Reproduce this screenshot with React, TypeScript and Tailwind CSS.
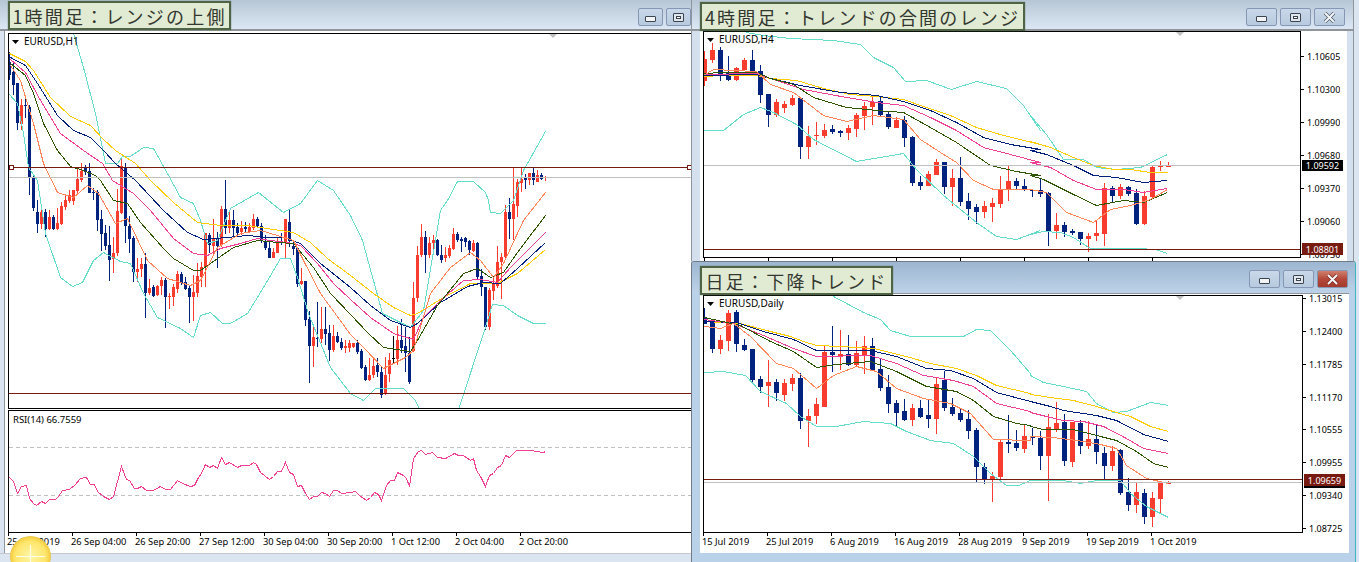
import React from "react";

type C = number[];
const BULL = "#f83d2f";
const BEAR = "#00227f";
const TEAL = "#66dccd";
const YEL = "#ffcc00";
const NAVY = "#001f7a";
const PINK = "#f03f96";
const GRN = "#2f5600";
const ORG = "#ff875a";
const RED = "#771a10";
const GREY = "#c0c0c0";

const scale = (a: number[], ox: number, oy: number) => {
  const out: number[] = [];
  for (let i = 0; i < a.length; i += 2) out.push(ox + a[i] / 3, oy + a[i + 1] / 3);
  return out;
};
const P = ({ p, c }: { p: number[]; c: string }) => (
  <polyline points={p.map((v) => Math.floor(v) + 0.5).join(" ")} fill="none" stroke={c} strokeWidth={1} shapeRendering="crispEdges" />
);

const Candles = ({ data, half }: { data: C[]; half: number }) => (
  <g shapeRendering="crispEdges">
    {data.map((d, i) => {
      const [x, t, h, o, c, l] = d;
      const col = t === 1 ? BULL : t === 2 ? "#000" : BEAR;
      return (
        <g key={i} fill={col}>
          <rect x={x} y={Math.round(h)} width={1} height={Math.max(1, Math.round(l - h))} />
          <rect x={x - half} y={Math.round(o)} width={half * 2 + 1} height={Math.max(1, Math.round(c - o))} />
        </g>
      );
    })}
  </g>
);

const H1: C[] = [
[9,0,52,62,75,80],[13,0,62,72,85,95],[17,0,83,83,123,130],[21,1,99,105,124,130],[25,0,99,105,106,118],[29,0,105,107,178,195],[33,0,176,177,208,211],[37,0,200,212,224,233],[41,1,205,212,224,229],[45,0,209,212,229,237],[49,1,210,217,229,230],[53,0,215,217,229,230],[57,1,208,223,229,230],[61,1,202,206,224,225],[65,1,195,200,207,210],[69,1,190,195,201,203],[73,1,190,190,201,205],[77,1,167,179,191,193],[81,1,163,171,180,182],[85,0,165,168,172,175],[89,0,163,171,193,193],[93,0,188,192,193,200],[97,0,190,192,220,231],[101,0,210,219,234,251],[105,0,225,233,246,250],[109,0,226,245,260,281],[113,1,237,253,259,273],[117,1,189,211,253,256],[121,1,157,166,213,214],[125,0,163,168,226,243],[129,0,216,226,239,253],[133,0,236,238,272,282],[137,1,258,269,272,282],[141,1,258,264,269,277],[145,0,253,264,293,318],[149,1,279,288,293,295],[153,0,285,287,296,297],[157,1,285,286,295,296],[161,1,277,280,286,295],[165,0,278,280,297,328],[169,1,293,296,297,309],[173,1,284,287,297,306],[177,1,271,274,289,293],[181,0,272,274,283,285],[185,0,277,282,289,290],[189,0,286,288,297,323],[193,1,275,292,297,321],[197,1,263,276,293,297],[201,1,262,267,277,287],[205,1,233,233,267,287],[209,0,233,235,245,253],[213,1,219,238,246,255],[217,0,232,238,246,268],[221,1,206,209,245,247],[225,0,180,209,228,234],[229,1,211,220,228,233],[233,0,210,220,228,236],[237,0,223,227,233,237],[241,1,221,228,232,235],[245,0,222,227,229,233],[249,1,223,227,232,233],[253,1,214,219,228,230],[257,0,217,219,226,227],[261,0,223,226,241,243],[265,0,235,241,248,250],[269,0,240,248,258,258],[273,1,248,252,258,258],[277,1,238,241,253,253],[281,0,233,241,243,245],[285,1,219,219,243,258],[289,0,210,222,241,247],[293,0,242,246,249,255],[297,0,248,248,284,287],[301,1,268,281,284,285],[305,0,281,281,320,326],[309,0,311,319,346,383],[313,1,327,337,346,367],[317,0,302,338,339,347],[321,1,307,329,339,343],[325,0,307,329,334,345],[329,0,325,333,350,361],[333,1,325,336,350,352],[337,0,332,336,342,343],[341,0,338,342,348,350],[345,1,340,346,348,353],[349,1,340,343,348,352],[353,1,343,343,347,348],[357,0,340,343,352,354],
[361,0,349,351,368,369],[365,0,365,367,380,381],[369,1,358,375,380,381],[373,1,358,366,375,378],[377,0,358,365,372,377],[381,0,367,372,395,398],[385,1,357,375,394,395],[389,1,353,360,374,382],[393,2,336,358,359,363],[397,1,326,340,359,365],[401,0,319,340,348,353],[405,0,327,346,353,372],[409,0,337,353,382,384],[413,1,282,298,351,352],[417,1,246,255,298,302],[421,1,224,237,255,257],[425,0,231,237,255,273],[429,1,237,243,255,258],[433,1,235,240,243,250],[437,0,239,240,255,256],[441,0,245,255,260,263],[445,1,247,255,258,262],[449,1,245,248,256,258],[453,1,228,234,249,250],[457,0,232,234,240,242],[461,0,237,239,241,252],[465,0,237,238,242,247],[469,0,240,241,250,255],[473,1,240,243,251,252],[477,0,242,243,277,279],[481,0,269,276,287,296],[485,0,287,287,327,330],[489,1,288,290,327,330],[493,1,277,283,291,300],[497,1,246,262,286,288],[501,1,253,257,262,299],[505,1,205,212,257,260],[509,0,198,212,219,239],[513,1,167,204,219,240],[517,1,179,182,206,217],[521,1,167,179,183,192],[525,0,174,178,180,189],[529,1,173,173,180,185],[533,0,168,173,180,185],[537,1,170,175,182,182],[541,0,173,175,179,180],[545,1,176,177,178,181],
];

const y1 = [9,53,25,61,33,70,50,97,70,116,90,125,103,139,115,150,135,163,150,180,173,202,197,222,220,225,247,225,273,229,293,232,310,242,327,258,350,275,373,293,393,307,410,315,417,313,443,297,470,283,497,283,517,273,545,249];
const n1 = [10,57,25,65,37,83,57,115,73,130,90,137,103,150,115,163,135,180,163,210,187,232,203,239,227,237,247,235,267,237,283,237,300,243,320,263,350,287,370,305,390,320,410,327,417,323,440,302,467,286,483,282,500,283,517,268,545,242];
const p1 = [10,59,25,72,40,100,60,133,83,150,102,163,112,180,133,193,150,210,173,238,193,253,207,255,220,248,240,243,257,238,270,240,287,242,300,245,317,263,333,283,350,299,370,317,393,333,413,339,423,317,440,300,463,280,480,279,497,282,510,267,545,232];
const g1 = [10,63,25,75,33,93,43,123,57,150,70,166,83,170,95,175,100,180,113,200,127,203,140,222,163,248,173,258,193,270,200,270,217,258,233,247,257,240,277,242,293,243,313,267,330,293,350,314,367,332,383,347,410,351,417,340,437,305,463,273,477,268,490,277,503,272,517,252,545,215];
const o1 = [10,65,20,80,33,123,43,163,57,192,73,197,87,185,98,193,115,223,127,218,147,260,167,278,190,285,200,280,217,247,240,233,260,230,277,235,293,240,303,260,320,293,350,334,363,347,383,368,405,357,413,350,430,293,450,267,470,252,480,260,493,277,503,263,523,220,545,192];
const t1a = [73,33,83,67,95,113,105,163,117,163,122,156,130,156,143,147,153,148,167,173,180,197,193,203,200,220,207,243,217,240,230,208,258,192,283,212,300,203,317,180,333,190,350,215,362,240,382,313,410,327,423,310,440,210,447,200,457,181,473,181,485,192,488,200,490,212,500,213,513,200,523,170,545,131];
const t1b = [9,94,17,103,23,133,28,167,37,180,45,233,60,277,72,286,82,282,93,260,103,252,120,261,130,263,143,293,157,317,180,328,193,337,200,315,210,312,222,323,230,323,247,313,263,287,280,258,290,258,297,277,308,313,330,367,350,393,363,400,375,388,403,388,415,400,419,409];
const t1c = [458,409,461,400,483,333,492,304,503,305,517,315,533,323,545,323];

const rsiA = [27,262,40,275,53,310,65,288,78,286,88,325,100,340,110,346,125,335,135,340,148,328,165,328,175,318,188,300,208,297,225,282,240,265,258,262,270,282,282,283,292,305,310,318,328,328,340,318,363,230,378,268,388,272,402,295,412,295,425,290,438,302,460,302,482,290,497,297,510,297,533,272,548,280,570,288,582,285,595,262,605,250,616,222,628,232,640,226,652,234,664,203,676,224,688,218,712,232,724,226,748,226,760,218,770,224,782,248,808,268,820,260,832,245,844,244,856,218,868,248,880,254,892,288,904,287,916,310,928,328,940,320,952,319,965,308,977,310,988,318,1000,302,1012,302,1024,310,1050,308];
const rsiB = [0,306,15,305,27,315,48,331,60,322,72,307,85,312,95,331,110,285,120,272,132,270,143,247,160,255,170,265,179,288,190,205,205,185,214,180,226,193,246,188,262,203,285,205,312,191,325,196,340,196,360,210,370,205,380,240,392,258,407,288,418,255,430,250,442,232,455,226,467,197,478,202,500,182,530,182,545,180,560,184,580,187,585,184];

const H4raw: C[] = [
[0,0,155,180,245,260,1],[1,0,132,153,183,192,1],[2,0,145,153,228,248,0],[3,0,172,220,243,246,0],[4,0,204,207,243,246,1],[5,0,178,183,212,214,1],[6,0,153,183,218,228,0],[7,0,197,217,288,312,0],[8,0,285,285,348,383,0],[9,0,300,309,348,355,1],[10,0,306,316,328,342,1],[11,0,289,297,319,322,1],[12,0,297,297,443,480,0],[13,0,380,411,443,480,1],[14,0,370,408,412,438,1],[15,0,375,393,412,418,1],[16,0,378,390,398,405,0],[17,0,392,396,402,414,0],[18,0,378,387,402,422,1],[19,0,343,348,390,414,1],[20,0,308,321,351,392,1],[21,0,290,310,324,378,1],[22,0,295,306,349,351,0],[23,0,338,345,384,388,0],[24,0,355,362,385,388,1],[25,0,350,363,417,444,0],[26,0,412,414,551,563,0],[27,0,532,549,561,573,0],[28,0,515,525,561,561,1],[29,0,480,489,528,528,1],[30,0,489,489,563,585,0],[31,0,510,537,564,620,1],[32,0,473,537,609,620,0],[33,0,582,606,630,662,0],[34,0,615,624,639,675,0],[35,0,605,621,639,655,1],[36,0,597,612,624,669,1],[37,0,531,570,615,627,1],[38,0,501,546,573,606,1],[39,0,538,546,561,570,0],[40,0,540,561,573,576,0],[41,0,570,572,574,594,0],[42,0,538,573,585,594,0],[43,0,580,582,696,741,0],[44,0,642,678,696,720,1],[45,0,670,678,698,714,0],[46,0,690,696,702,708,0],[47,0,699,699,720,738,0],[48,0,702,711,720,759,1],[49,0,664,702,711,726,1],[50,0,552,567,705,741,1],[51,0,561,567,591,612,0],[52,0,555,564,591,600,1],[53,0,561,564,585,591,0],[54,0,570,582,675,678,0],[55,0,576,591,675,678,1],[56,0,498,504,594,600,1],[57,0,486,501,504,516,1],[58,0,489,498,504,504,1]];
const H4: C[] = H4raw.map((d) => [704 + 8 * d[0], d[6], d[2] / 3, d[3] / 3, d[4] / 3, d[5] / 3]);

const DArawA: C[] = [
[0,145,170,192,194,0],[1,178,183,267,279,0],[2,225,240,267,282,1],[3,150,159,243,273,1],[4,150,156,252,276,0],[5,237,255,270,273,0],[6,267,267,360,366,0],[7,348,357,381,399,0],[8,300,366,378,441,1],[9,357,366,399,423,0],[10,357,369,405,423,1],[11,342,354,372,393,1],[12,339,354,483,507,0],[13,447,468,483,561,1],[14,414,432,468,492,1],[15,258,276,441,441,1],[16,198,276,285,336,0],[17,210,282,288,330,1],[18,225,282,315,318,0],[19,243,279,315,318,1],[20,228,258,288,342,1],[21,234,258,330,330,0],[22,294,327,384,393,0],[23,345,381,432,459,0],[24,420,429,459,498,0],[25,417,453,480,483,0],[26,432,444,480,498,1],[27,420,444,471,474,0],[28,420,465,477,504,0],[29,354,372,477,522,1],[30,333,360,444,453,0],[31,414,441,462,468,0],[32,444,459,480,486,0],[33,450,477,513,537,0],[34,504,510,621,666,0],[35,609,621,657,672,0],[36,636,648,657,726,1],[37,540,546,651,657,1],[38,465,546,552,579,0],[39,510,549,564,573,0],[40,492,528,567,579,1]];
const DArawB: C[] = [
[41,415,438,444,465,0],[42,423,444,498,540,0],[43,372,411,498,633,1],[44,336,399,417,426,1],[45,372,396,513,528,0],[46,396,396,516,531,1],[47,390,399,468,492,0],[48,393,447,468,477,1],[49,402,447,486,522,0],[50,471,489,528,570,0],[51,468,483,528,543,1],[52,477,480,609,615,0],[53,564,606,645,663,0],[54,579,606,645,669,1],[55,597,609,681,702,0],[56,606,624,681,711,1],[57,573,579,627,669,1],[58,573,576,582,582,1]];
const conv = (d: C, oy: number): C => [704 + 8 * d[0], d[5], oy + d[1] / 3, oy + d[2] / 3, oy + d[3] / 3, oy + d[4] / 3];
const DA: C[] = [...DArawA.map((d) => conv(d, 260)), ...DArawB.map((d) => conv(d, 290))];

const join = (a: number[], ao: [number, number], b: number[], bo: [number, number]) => [
  ...scale(a, ao[0], ao[1]),
  ...scale(b, bo[0], bo[1]),
];
const H4L = (a: number[], b: number[]) => join(a, [690, 0], b, [1030, 0]);
const DL = (a: number[], b: number[]) => join(a, [690, 260], b, [1030, 290]);

const h4Lines: [number[], string][] = [
  [H4L([40,395,100,395,160,345,210,325,250,340,320,375,370,420,500,488,640,462,680,510,760,590,860,670,920,712,980,722,1050,695], [0,705,40,697,90,700,130,715,180,747,350,747]), TEAL],
  [scale([375,752,412,762], 1030, 0), TEAL],
  [H4L([170,100,220,110,300,118,430,125,510,135,550,175,610,205,645,248,710,243,785,270,860,248,950,268,1000,320,1050,395], [0,350,50,405,100,480,160,480,200,505,260,510,330,505,412,465]), TEAL],
  [H4L([40,232,100,230,200,230,240,238,320,245,400,268,480,286,560,292,640,300,700,322,780,350,860,385,940,408,1050,435], [0,428,60,445,130,475,190,500,250,510,300,510,360,520,412,520]), YEL],
  [H4L([40,228,200,226,240,238,330,258,450,280,560,290,640,308,720,335,800,370,880,415,960,435,1050,450], [0,455,50,465,130,500,190,528,260,535,340,550,412,544]), NAVY],
  [H4L([40,225,200,224,240,238,340,270,470,295,560,310,640,320,720,355,800,395,880,445,960,465,1050,490], [0,490,60,505,130,545,200,572,280,572,340,580,412,567]), PINK],
  [H4L([40,222,100,219,200,220,240,238,310,255,370,295,470,325,560,335,640,340,720,385,800,430,900,500,980,518,1050,530], [0,530,40,540,130,585,200,620,280,604,340,610,412,580]), GRN],
  [H4L([40,228,70,210,130,215,200,218,240,255,310,280,400,350,470,368,550,348,640,360,690,420,750,460,800,490,850,545,910,570,1000,570], [0,570,50,580,110,640,190,670,240,630,300,618,360,600,412,570]), ORG],
];
const dLines: [number[], string][] = [
  [DL([44,338,100,333,165,345,210,395,290,430,330,470,380,498,440,498,520,485,600,490,650,515,720,540,790,550,850,590,900,640,950,675,985,675,1020,660], [0,570,30,570,100,570,150,580,200,570,270,570,300,610,350,650,414,682]), TEAL],
  [DL([430,110,520,158,570,178,600,210,660,228,820,230,860,208,900,210,960,270,1020,340], [0,255,40,278,100,290,170,305,200,340,250,367,290,365,360,338,414,346]), TEAL],
  [DL([44,185,150,190,230,210,300,230,340,245,380,257,450,258,550,265,650,290,720,310,800,325,860,345,920,375,1020,400], [0,312,60,322,130,330,200,350,260,368,300,380,360,408,414,423]), YEL],
  [DL([44,183,140,188,220,215,310,238,380,272,540,272,620,290,710,325,780,330,850,355,920,398,1020,425], [0,335,60,348,100,360,200,375,260,392,340,432,414,453]), NAVY],
  [DL([44,178,130,190,220,225,310,265,380,290,540,285,620,310,700,345,790,360,850,380,920,430,1020,455], [0,367,60,382,100,390,160,395,220,410,290,445,340,475,414,489]), PINK],
  [DL([44,172,150,195,240,245,310,275,380,322,440,312,540,305,620,335,710,380,800,395,850,420,910,470,980,490,1020,497], [0,408,40,418,130,418,210,440,260,450,320,485,370,520,414,531]), GRN],
  [DL([44,198,90,205,130,190,180,230,260,310,310,325,380,385,430,345,500,320,560,335,620,385,700,415,780,430,840,460,910,538,1020,542], [0,440,70,443,140,450,210,462,260,475,290,525,350,565,414,580]), ORG],
];

const ChartLabel = ({ x, y, text }: { x: number; y: number; text: string }) => (
  <g>
    <polygon points={`${x},${y - 2} ${x + 7},${y - 2} ${x + 3.5},${y + 2}`} fill="#000" />
    <text x={x + 12} y={y + 3} fontSize={10} fill="#000">{text}</text>
  </g>
);

const Btn = ({ kind, red }: { kind: "min" | "max" | "close"; red?: boolean }) => (
  <div
    className={`w-[31px] h-[18px] rounded-[2px] border border-[#8597b4] flex items-center justify-center ${
      red ? "bg-gradient-to-b from-[#cf7f6c] via-[#b5483a] to-[#a23a2c]" : "bg-gradient-to-b from-[#c9d8e9] to-[#b7cade]"
    }`}
  >
    {kind === "min" && <div className="w-[11px] h-[6px] mt-1 rounded-[1px] border border-[#3c4450] bg-[#f2f4f6]" />}
    {kind === "max" && (
      <div className="w-[11px] h-[9px] rounded-[1px] border border-[#3c4450] bg-[#dfe6ee] flex items-center justify-center">
        <div className="w-[5px] h-[3px] border border-[#3c4450] bg-white" />
      </div>
    )}
    {kind === "close" && (
      <svg width="13" height="11" viewBox="0 0 13 11">
        <path d="M2 1 L11 10 M11 1 L2 10" stroke={red ? "#7b2a20" : "#4c5662"} strokeWidth="3.4" />
        <path d="M2 1 L11 10 M11 1 L2 10" stroke="#f4f6f8" strokeWidth="2" />
      </svg>
    )}
  </div>
);

const Tag = ({ text, cls }: { text: string; cls: string }) => (
  <div
    className={`absolute z-10 h-[29px] flex items-center justify-center border-2 border-[#4f6444] bg-[#e1ebd4] text-[18px] leading-none tracking-[2.2px] whitespace-nowrap text-[#33372f] shadow-[0_0_1px_#4f6444] font-['Noto_Sans_CJK_JP',sans-serif] ${cls}`}
  >
    {text}
  </div>
);

const XAxis = ({ labels, cell }: { labels: string[]; cell: string }) => (
  <div className="flex h-5">
    {labels.map((l) => (
      <div key={l} className={`${cell} shrink-0 flex flex-col items-start`}>
        <div className="w-px h-[3px] bg-black" />
        <div className="-ml-px text-[9.3px] leading-[11px] text-black whitespace-nowrap">{l}</div>
      </div>
    ))}
  </div>
);

const YAxis = ({ prices, cls, row }: { prices: string[]; cls: string; row: string }) => (
  <div className={`flex flex-col ${cls}`}>
    {prices.map((p) => (
      <div key={p} className={`${row} shrink-0 flex items-center gap-[3px]`}>
        <div className="w-[3px] h-px bg-black" />
        <span className="text-[9px] leading-none text-black">{p}</span>
      </div>
    ))}
  </div>
);

const PriceBox = ({ text, cls }: { text: string; cls: string }) => (
  <div className={`absolute flex items-center justify-center w-[41px] h-[11px] text-[9px] leading-none text-white ${cls}`}>{text}</div>
);

const Sun = () => (
  <svg className="absolute left-[10px] top-[536px] z-20" width="42" height="42" viewBox="0 0 42 42">
    <defs>
      <radialGradient id="sun" cx="50%" cy="50%" r="50%">
        <stop offset="0%" stopColor="#fff6a8" />
        <stop offset="75%" stopColor="#ffe56a" />
        <stop offset="95%" stopColor="#f5cf45" />
        <stop offset="100%" stopColor="#e0c25a" />
      </radialGradient>
    </defs>
    <circle cx="20.5" cy="20.5" r="20.5" fill="url(#sun)" />
    <path d="M20.5 9 V32 M6 20.5 H35" stroke="#fffde8" strokeWidth="1.2" />
  </svg>
);

const TITLE = "bg-gradient-to-b from-[#b7c6d5] to-[#dbe7f5]";

export default function App() {
  return (
    <div className="relative w-[1359px] h-[562px] overflow-hidden flex bg-[#dbe5f1] font-['Noto_Sans',sans-serif]">
      {/* 1H window */}
      <div className="relative w-[691px] h-[562px] shrink-0 overflow-hidden flex flex-col">
        <Tag text="1時間足：レンジの上側" cls="left-[8px] top-[1px] w-[223px]" />
        <div className={`h-[29px] shrink-0 flex justify-start gap-[3px] pl-[638px] pt-[8px] ${TITLE}`}>
          <Btn kind="min" />
          <Btn kind="max" />
        </div>
        <div className="h-[2px] shrink-0 bg-[#8f9599]" />
        <div className="flex-1 flex pl-[4px]">
          <div className="w-[4px] shrink-0 bg-white border-l border-[#8f9599]" />
          <div className="w-[700px] shrink-0 bg-white pt-[2px] flex flex-col">
            <div className="border-y border-l border-black">
              <svg className="block" width="699" height="374" viewBox="9 34 699 374">
                <Candles data={H1} half={1} />
                <P p={t1a} c={TEAL} />
                <P p={t1b} c={TEAL} />
                <P p={t1c} c={TEAL} />
                <P p={y1} c={YEL} />
                <P p={n1} c={NAVY} />
                <P p={p1} c={PINK} />
                <P p={g1} c={GRN} />
                <P p={o1} c={ORG} />
                <g shapeRendering="crispEdges">
                  <rect x="9" y="177" width="699" height="1" fill={GREY} />
                  <rect x="9" y="167" width="699" height="1" fill={RED} />
                  <rect x="9" y="393" width="699" height="1" fill={RED} />
                  <rect x="9.5" y="165.5" width="4" height="4" fill="#fff" stroke={RED} />
                  <rect x="687.5" y="165.5" width="4" height="4" fill="#fff" stroke={RED} />
                </g>
                <polygon points="549,34 557,34 553,38" fill={GREY} />
                <ChartLabel x={12} y={42} text="EURUSD,H1" />
              </svg>
            </div>
            <div className="h-px shrink-0" />
            <div className="border-y border-l border-black">
              <svg className="block" width="699" height="121" viewBox="9 411 699 121">
                <g shapeRendering="crispEdges">
                  <line x1="9" x2="708" y1="447.5" y2="447.5" stroke={GREY} strokeDasharray="4 3" />
                  <line x1="9" x2="708" y1="495.5" y2="495.5" stroke={GREY} strokeDasharray="4 3" />
                </g>
                <P p={scale(rsiA, 0, 390)} c={PINK} />
                <P p={scale(rsiB, 350, 390)} c={PINK} />
                <text x="13" y="423" fontSize={9.5} fill="#000">RSI(14) 66.7559</text>
              </svg>
            </div>
            <XAxis
              cell="w-[64px]"
              labels={["25 Sep 2019","26 Sep 04:00","26 Sep 20:00","27 Sep 12:00","30 Sep 04:00","30 Sep 20:00","1 Oct 12:00","2 Oct 04:00","2 Oct 20:00"]}
            />
          </div>
        </div>
        <div className="h-[9px] shrink-0 bg-[#dbe5f1] border-t border-[#c4c8cc]" />
        <Sun />
      </div>

      {/* right column */}
      <div className="w-[668px] h-[562px] shrink-0 flex flex-col">
        {/* 4H window */}
        <div className="relative h-[261px] shrink-0 overflow-hidden w-[663px] flex flex-col border-x border-[#8f9599]">
          <Tag text="4時間足：トレンドの合間のレンジ" cls="left-[8px] top-[2px] w-[325px]" />
          <div className={`h-[29px] shrink-0 flex justify-end gap-[3px] pr-[8px] pt-[8px] ${TITLE}`}>
            <Btn kind="min" />
            <Btn kind="max" />
            <Btn kind="close" />
          </div>
          <div className="h-[2px] shrink-0 bg-[#8f9599]" />
          <div className="flex-1 flex bg-[#d5e0ee] pl-[8px] pr-[6px]">
            <div className="flex-1 flex bg-white pl-[3px] min-w-0">
              <div className="relative flex flex-col w-[645px] shrink-0">
                <div className="flex">
                  <div className="border border-black w-[598px] shrink-0">
                    <svg className="block" width="596" height="225" viewBox="704 33 596 225">
                      <Candles data={H4} half={2} />
                      {h4Lines.map(([p, c], i) => <P key={i} p={p} c={c} />)}
                      <g shapeRendering="crispEdges">
                        <rect x="704" y="166" width="596" height="1" fill={GREY} />
                        <rect x="704" y="250" width="596" height="1" fill={RED} />
                      </g>
                      <polygon points="1176,33 1184,33 1180,37" fill={GREY} />
                      <ChartLabel x={707} y={41} text="EURUSD,H4" />
                    </svg>
                  </div>
                  <YAxis row="h-[33px]" cls="pt-[9px] h-[227px] overflow-hidden" prices={["1.10605","1.10300","1.09990","1.09680","1.09370","1.09060","1.08750"]} />
                </div>
                <PriceBox text="1.09592" cls="left-[599px] top-[129px] bg-black" />
                <PriceBox text="1.08801" cls="left-[599px] top-[212px] h-[12px] bg-[#771a10]" />
                <div className="flex">
                  {[0,1,2,3,4,5,6,7].map((i) => (
                    <div key={i} className="w-[64px] h-[3px] shrink-0"><div className="w-px h-[3px] bg-black ml-px" /></div>
                  ))}
                </div>
              </div>
            </div>
          </div>
        </div>

        {/* Daily window */}
        <div className="relative flex-1 flex flex-col w-[665px] rounded-t-[3px] border-t border-l border-r border-[#6f7c88] border-r-[#3cb4c4] overflow-hidden">
          <Tag text="日足：下降トレンド" cls="left-[8px] top-[4px] w-[193px]" />
          <div className="h-[31px] shrink-0 flex justify-end gap-[3px] pr-[7px] pt-[8px] bg-gradient-to-b from-[#9db6d1] to-[#bdd2e8]">
            <Btn kind="min" />
            <Btn kind="max" />
            <Btn kind="close" red />
          </div>
          <div className="flex-1 flex bg-[#b9d1e9] px-[8px] pr-[6px]">
            <div className="flex-1 bg-white border-t border-[#8f9599] pl-[3px] pt-[1px] h-[260px] flex flex-col relative">
              <div className="flex h-[238px]">
                <div className="border border-black w-[600px] h-[238px] shrink-0">
                  <svg className="block" width="598" height="236" viewBox="704 296 598 236">
                    <Candles data={DA} half={2} />
                    {dLines.map(([p, c], i) => <P key={i} p={p} c={c} />)}
                    <g shapeRendering="crispEdges">
                      <rect x="704" y="482" width="598" height="1" fill={GREY} />
                      <rect x="704" y="479" width="598" height="1" fill={RED} />
                    </g>
                    <polygon points="1176,296 1184,296 1180,300" fill={GREY} />
                    <ChartLabel x={707} y={304} text="EURUSD,Daily" />
                  </svg>
                </div>
                <YAxis row="h-[32.86px]" cls="-mt-[13px]" prices={["1.13015","1.12400","1.11785","1.11170","1.10555","1.09955","1.09340","1.08725"]} />
              </div>
              <PriceBox text="1.09592" cls="left-[604px] top-[183px] bg-black" />
              <PriceBox text="1.09659" cls="left-[604px] top-[180px] h-[12px] bg-[#771a10]" />
              <XAxis
                cell="w-[64px]"
                labels={["15 Jul 2019","25 Jul 2019","6 Aug 2019","16 Aug 2019","28 Aug 2019","9 Sep 2019","19 Sep 2019","1 Oct 2019"]}
              />
            </div>
          </div>
        </div>
      </div>
    </div>
  );
}
